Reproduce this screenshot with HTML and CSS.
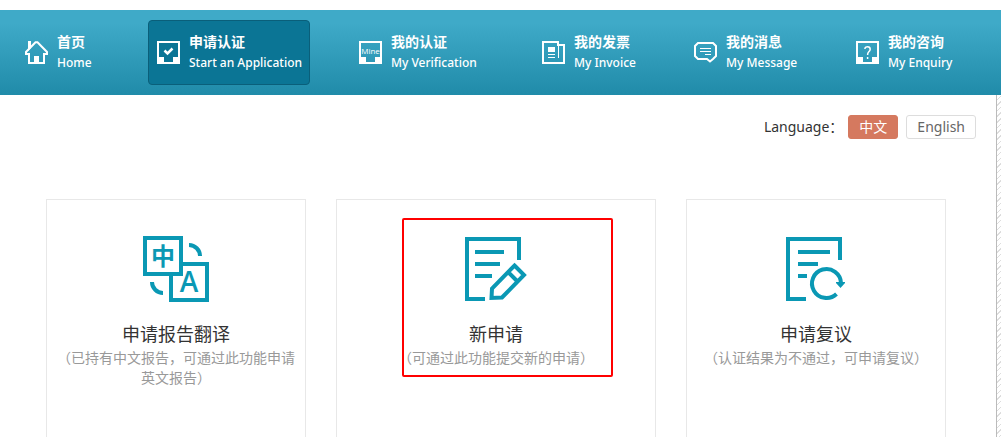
FILE: index.html
```html
<!DOCTYPE html>
<html lang="zh-CN">
<head>
<meta charset="utf-8">
<title>申请认证</title>
<link rel="stylesheet" href="styles.css">
</head>
<body>
<header class="header">
  <nav class="nav">
    <a class="nav-item" href="#">
      <svg class="nav-icon" viewBox="0 0 23 23" fill="none" stroke="#fff" stroke-width="2"><path d="M3 0H6V7L3 10Z" fill="#fff" stroke="none"/><path d="M5 13H1V11L10.500 1.200H12.500L22 11V13H18M4 12V22H19V12"/><path d="M9 15H14V22H9Z" fill="#fff" stroke="none"/></svg>
      <span class="nav-text"><b class="nav-zh">首页</b><span class="nav-en">Home</span></span>
    </a>
    <a class="nav-item nav-item-active" href="#">
      <svg class="nav-icon" viewBox="0 0 23 23" fill="none" stroke="#fff" stroke-width="2"><path d="M1 1H22V22H1Z"/><path d="M0 16H7V21H16V16H23V23H0Z" fill="#fff" stroke="none"/><path d="M7.500 9.500L10.500 12.500L15.500 7.500" stroke-width="2.500"/></svg>
      <span class="nav-text"><b class="nav-zh">申请认证</b><span class="nav-en">Start an Application</span></span>
    </a>
    <a class="nav-item" href="#">
      <svg class="nav-icon" viewBox="0 0 23 23" fill="none" stroke="#fff" stroke-width="2"><path d="M1 1H22V22H1Z"/><path d="M0 16H7V21H16V16H23V23H0Z" fill="#fff" stroke="none"/><text class="icon-mine" x="11.500" y="13" text-anchor="middle">Mine</text></svg>
      <span class="nav-text"><b class="nav-zh">我的认证</b><span class="nav-en">My Verification</span></span>
    </a>
    <a class="nav-item" href="#">
      <svg class="nav-icon" viewBox="0 0 23 23" fill="none" stroke="#fff" stroke-width="2"><path d="M16 5V1H1V22H22V4H16"/><path d="M16.500 4V17M6 13.500H13M6 16.500H13" stroke-width="1"/><path d="M6 6H13V11H6Z" fill="#fff" stroke="none"/></svg>
      <span class="nav-text"><b class="nav-zh">我的发票</b><span class="nav-en">My Invoice</span></span>
    </a>
    <a class="nav-item" href="#">
      <svg class="nav-icon" viewBox="0 0 23 23" fill="none" stroke="#fff" stroke-width="2"><path d="M4 2H19L22 5V15L19 18L16 20.500L13 18H4L1 15V5Z"/><path d="M6 7.500H17M6 10.500H17M11 13.500H17" stroke-width="1"/></svg>
      <span class="nav-text"><b class="nav-zh">我的消息</b><span class="nav-en">My Message</span></span>
    </a>
    <a class="nav-item" href="#">
      <svg class="nav-icon" viewBox="0 0 23 23" fill="none" stroke="#fff" stroke-width="2"><path d="M1 1H22V22H1Z"/><path d="M0 16H7V21H16V16H23V23H0Z" fill="#fff" stroke="none"/><path d="M9 8V7Q9.500 5.800 11.500 5.800Q14.200 5.800 14.200 8.200Q14.200 9.700 12.600 11Q11.600 12 11.600 14M11.600 16V18" stroke-width="1.500"/></svg>
      <span class="nav-text"><b class="nav-zh">我的咨询</b><span class="nav-en">My Enquiry</span></span>
    </a>
  </nav>
</header>
<main class="panel">
  <div class="language">
    <span>Language：</span>
    <button class="lang-btn lang-btn-active" type="button">中文</button>
    <button class="lang-btn" type="button">English</button>
  </div>
  <section class="cards">
    <a class="card" href="#">
      <span class="card-icon"><svg width="66" height="66" viewBox="0 0 66 66" fill="none" stroke="#0a98b4" stroke-width="4"><path d="M2 2H38V38H2ZM40 28H64V64H28V40M46 9A11 11 0 0 1 57 20M9 46A11 11 0 0 0 20 57"/><text class="icon-zh" x="20" y="29" text-anchor="middle">中</text><text class="icon-en" x="46" y="56" text-anchor="middle">A</text></svg></span>
      <span class="card-title">申请报告翻译</span>
      <span class="card-note">（已持有中文报告，可通过此功能申请英文报告）</span>
    </a>
    <a class="card" href="#">
      <span class="card-icon"><svg width="62" height="64" viewBox="0 0 62 64" fill="none" stroke="#0a98b4" stroke-width="4"><path d="M54 23V2H2V62H20M10 15H39M10 27H35M10 39H27"/><path d="M49.500 28.500L59 38L37 60.500L26.500 61L27 51.500ZM43 35L53 45"/></svg></span>
      <span class="card-title">新申请</span>
      <span class="card-note">（可通过此功能提交新的申请）</span>
      <span class="highlight"></span>
    </a>
    <a class="card" href="#">
      <span class="card-icon"><svg width="60" height="64" viewBox="0 0 60 64" fill="none" stroke="#0a98b4" stroke-width="4"><path d="M54 23V2H2V62H20M12 15H44M12 27H32M12 39H21"/><path d="M55 46A14.500 14.500 0 1 0 50.500 57"/><path d="M50 45H59V46L54.500 51L50 46Z" fill="#0a98b4" stroke="none"/></svg></span>
      <span class="card-title">申请复议</span>
      <span class="card-note">（认证结果为不通过，可申请复议）</span>
    </a>
  </section>
</main>
</body>
</html>
```
FILE: styles.css
```css
* { box-sizing: border-box; }
body {
  margin: 0;
  min-height: 100vh;
  display: flex;
  flex-direction: column;
  background: #fff repeating-linear-gradient(135deg, #fff 0 3px, #ddd 3px 4px);
  color: #333;
  font: 14px/20px "Noto Sans", "Noto Sans CJK SC", sans-serif;
}
a { color: inherit; text-decoration: none; }
.header {
  border-top: 10px solid #fff;
  padding: 10px 0 10px 16px;
  background: linear-gradient(#3faac8 15%, #208ba9) padding-box;
  color: #fff;
}
.nav {
  display: grid;
  grid-template-columns: 132fr 202fr 183fr 152fr 162fr 154fr;
  justify-items: start;
}
.nav-item {
  display: flex;
  align-items: center;
  gap: 9px;
  height: 65px;
  padding: 0 7px 0 8px;
  border: 1px solid transparent;
  border-radius: 4px;
  white-space: nowrap;
}
.nav-item-active { background: #0b7595; border-color: #0a5f7a; }
.nav-icon { width: 23px; height: 23px; flex: none; }
.nav-text { display: flex; flex-direction: column; }
.nav-zh { font-size: 14px; }
.nav-en { font-size: 12px; font-weight: 500; line-height: 22px; }
.icon-mine { fill: #fff; stroke: none; font: 500 8px "Open Sans", sans-serif; }
.panel {
  flex: 1;
  display: flex;
  flex-direction: column;
  gap: 60px;
  margin-right: 4px;
  padding: 20px 20px 0 46px;
  border-right: 1px solid #bbb;
  background: #fff;
}
.language { display: flex; align-items: center; justify-content: flex-end; gap: 8px; }
.language span { margin-right: -3px; }
.lang-btn {
  height: 24px;
  padding: 0 10px;
  border: 1px solid #ddd;
  border-radius: 3px;
  background: #fff;
  color: #666;
  font: inherit;
  line-height: 20px;
}
.lang-btn-active { background: #d5795f; border-color: #d5795f; color: #fff; }
.cards {
  flex: 1;
  display: grid;
  grid-template-columns: 26fr 32fr 26fr;
  gap: 30px;
  margin-right: 30px;
}
.card {
  position: relative;
  padding: 35px 10px 40px;
  border: 1px solid #e8e8e8;
  border-bottom: 0;
  display: flex;
  flex-direction: column;
  align-items: center;
  text-align: center;
}
.card-icon { height: 68px; display: flex; align-items: center; }
.card-title { margin: 19px 0 2px; font-size: 18px; line-height: 24px; }
.card-note { color: #999; text-spacing-trim: space-all; }
.icon-zh { fill: #0a98b4; stroke: none; font: bold 24px "Noto Sans CJK SC", sans-serif; }
.icon-en { fill: #0a98b4; stroke: none; font: 600 28px "Open Sans", sans-serif; }
.highlight {
  position: absolute;
  left: 65px;
  top: 18px;
  width: 211px;
  height: 159px;
  border: 2px solid #f00;
  border-radius: 2px;
}
```
